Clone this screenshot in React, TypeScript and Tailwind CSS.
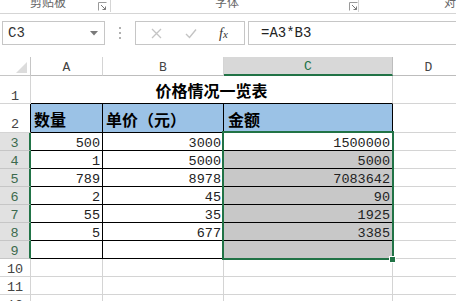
const CJK = { fontFamily: '"Noto Sans CJK SC", "Noto Sans", sans-serif' };
const MONO = { fontFamily: '"Liberation Mono", "DejaVu Sans Mono", monospace' };

function Launcher() {
  return (
    <svg width="9" height="9" viewBox="0 0 9 9" className="mt-[2px]">
      <path d="M0.5 8.5V0.5H8.5" fill="none" stroke="#9a9a9a" strokeWidth="1" />
      <path d="M3 3L7.5 7.5M7.5 4.5V7.5H4.5" fill="none" stroke="#7a7a7a" strokeWidth="1" />
    </svg>
  );
}

const rowsData = [
  { n: 3, a: "500", b: "3000", c: "1500000" },
  { n: 4, a: "1", b: "5000", c: "5000" },
  { n: 5, a: "789", b: "8978", c: "7083642" },
  { n: 6, a: "2", b: "45", c: "90" },
  { n: 7, a: "55", b: "35", c: "1925" },
  { n: 8, a: "5", b: "677", c: "3385" },
  { n: 9, a: "", b: "", c: "" },
];

const num = "flex items-end justify-end pr-[2px] text-[13.5px] leading-none text-[#222]";

export default function App() {
  return (
    <div className="relative w-[456px] h-[301px] overflow-hidden bg-white">
      {/* ribbon group labels (cut off) */}
      <div className="flex h-[14px] border-b border-[#d5d5d5] overflow-hidden text-[12px] leading-[12px] text-[#666]" style={CJK}>
        <div className="flex w-[114px] border-r border-[#d5d5d5] h-[12px]">
          <span className="-mt-[4px] pl-[30px] w-[98px]">剪贴板</span>
          <Launcher />
        </div>
        <div className="flex w-[250px] border-r border-[#d5d5d5] h-[12px]">
          <span className="-mt-[4px] pl-[104px] w-[238px]">字体</span>
          <Launcher />
        </div>
        <div className="flex-1 pl-[85px]">
          <span className="-mt-[4px] block">对</span>
        </div>
      </div>

      {/* formula bar */}
      <div className="flex items-center h-[43px] pl-[2px] pb-[5px]">
        <div className="flex items-center justify-between w-[103px] h-[24px] border border-[#c6c6c6] pl-[5px] pr-[6px]">
          <span className="text-[14px] text-[#333]" style={MONO}>C3</span>
          <svg width="8" height="5" viewBox="0 0 8 5">
            <path d="M0 0H8L4 4.5Z" fill="#7a7a7a" />
          </svg>
        </div>
        <div className="flex flex-col items-center justify-center gap-[3px] w-[30px]">
          <span className="w-[2px] h-[2px] bg-[#b0b0b0]" />
          <span className="w-[2px] h-[2px] bg-[#b0b0b0]" />
          <span className="w-[2px] h-[2px] bg-[#b0b0b0]" />
        </div>
        <div className="flex items-center w-[110px] h-[24px] border border-[#c6c6c6] pl-[15px]">
          <svg width="11" height="11" viewBox="0 0 11 11">
            <path d="M1 1L10 10M10 1L1 10" stroke="#c4c4c4" strokeWidth="1.3" />
          </svg>
          <svg width="12" height="11" viewBox="0 0 12 11" className="ml-[23px]">
            <path d="M1 6L4.5 9.5L11 1.5" fill="none" stroke="#c4c4c4" strokeWidth="1.4" />
          </svg>
          <span className="ml-[22px] text-[14px] italic text-[#333]" style={{ fontFamily: '"Liberation Serif", serif' }}>
            f<span className="text-[11px]">x</span>
          </span>
        </div>
        <div className="flex items-center flex-1 h-[24px] ml-[3px] border border-[#c6c6c6] border-r-0 pl-[12px]">
          <span className="text-[14px] text-[#222]" style={MONO}>=A3*B3</span>
        </div>
      </div>

      {/* sheet */}
      <div className="relative w-[465px]" style={MONO}>
        <div className="grid grid-cols-[31px_72px_121px_169px_72px] grid-rows-[19px_28px_29px_repeat(10,18px)] text-[13.5px]">
          {/* column headers */}
          <div className="relative border-r border-b border-[#c6c6c6] bg-white">
            <svg width="11" height="11" viewBox="0 0 11 11" className="absolute right-[3px] bottom-[2px]">
              <path d="M11 0V11H0Z" fill="#dcdcdc" />
            </svg>
          </div>
          <div className="flex items-end justify-center pb-[1px] border-r border-b border-[#d4d4d4] border-b-[#bdbdbd] text-[13px] leading-none text-[#444]">A</div>
          <div className="flex items-end justify-center pb-[1px] border-r border-b border-[#d4d4d4] border-b-[#bdbdbd] text-[13px] leading-none text-[#444]">B</div>
          <div className="flex items-end justify-center pb-[1px] border-r border-[#bdbdbd] border-b-2 border-b-[#217346] bg-[#d8d8d8] text-[13px] leading-none text-[#217346]">C</div>
          <div className="flex items-end justify-center pb-[1px] border-r border-b border-[#d4d4d4] border-b-[#bdbdbd] text-[13px] leading-none text-[#444]">D</div>

          {/* row 1 */}
          <div className="flex items-end justify-center border-r border-b border-[#d4d4d4] leading-none text-[#444]">1</div>
          <div className="col-span-3 flex items-end justify-center pb-[5px] border-r border-[#d4d4d4] border-b border-b-black text-[16px] leading-none font-bold text-black" style={CJK}>
            价格情况一览表
          </div>
          <div className="border-r border-b border-[#d4d4d4]" />

          {/* row 2 */}
          <div className="flex items-end justify-center pb-[1px] border-r border-b border-[#d4d4d4] border-r-black leading-none text-[#444]">2</div>
          <div className="flex items-end pl-[3px] pb-[5px] bg-[#9bc2e6] border-r border-b border-black text-[16px] leading-none font-bold" style={CJK}>数量</div>
          <div className="flex items-end pl-[3px] pb-[5px] bg-[#9bc2e6] border-r border-b border-black text-[16px] leading-none font-bold" style={CJK}>单价（元）</div>
          <div className="flex items-end pl-[4px] pb-[5px] bg-[#9bc2e6] border-r border-b border-black text-[16px] leading-none font-bold" style={CJK}>金额</div>
          <div className="border-r border-b border-[#d4d4d4]" />

          {/* rows 3-9 */}
          {rowsData.map((r) => (
            <div key={r.n} className="contents">
              <div className="flex items-end justify-center bg-[#e1e1e1] border-b border-[#c6c6c6] border-r-2 border-r-[#217346] leading-none text-[#3c6a4d]">{r.n}</div>
              <div className={`${num} border-r border-b border-black`}>{r.a}</div>
              <div className={`${num} border-r border-b border-black`}>{r.b}</div>
              <div className={`${num} border-r border-b border-black ${r.n === 3 ? "bg-white" : "bg-[#c8c8c8]"}`}>{r.c}</div>
              <div className="border-r border-b border-[#d4d4d4]" />
            </div>
          ))}

          {/* rows 10-12 */}
          {[10, 11, 12].map((n) => (
            <div key={n} className="contents">
              <div className="flex items-end justify-center border-r border-b border-[#d4d4d4] leading-none text-[#444]">{n}</div>
              <div className="border-r border-b border-[#d4d4d4]" />
              <div className="border-r border-b border-[#d4d4d4]" />
              <div className="border-r border-b border-[#d4d4d4]" />
              <div className="border-r border-b border-[#d4d4d4]" />
            </div>
          ))}
        </div>

        {/* selection C3:C9 */}
        <div className="absolute left-[222px] top-[74px] w-[172px] h-[129px] border-2 border-[#217346]" />
        <div className="absolute left-[389px] top-[199px] w-[7px] h-[7px] bg-[#217346] border border-white" />
      </div>
    </div>
  );
}
